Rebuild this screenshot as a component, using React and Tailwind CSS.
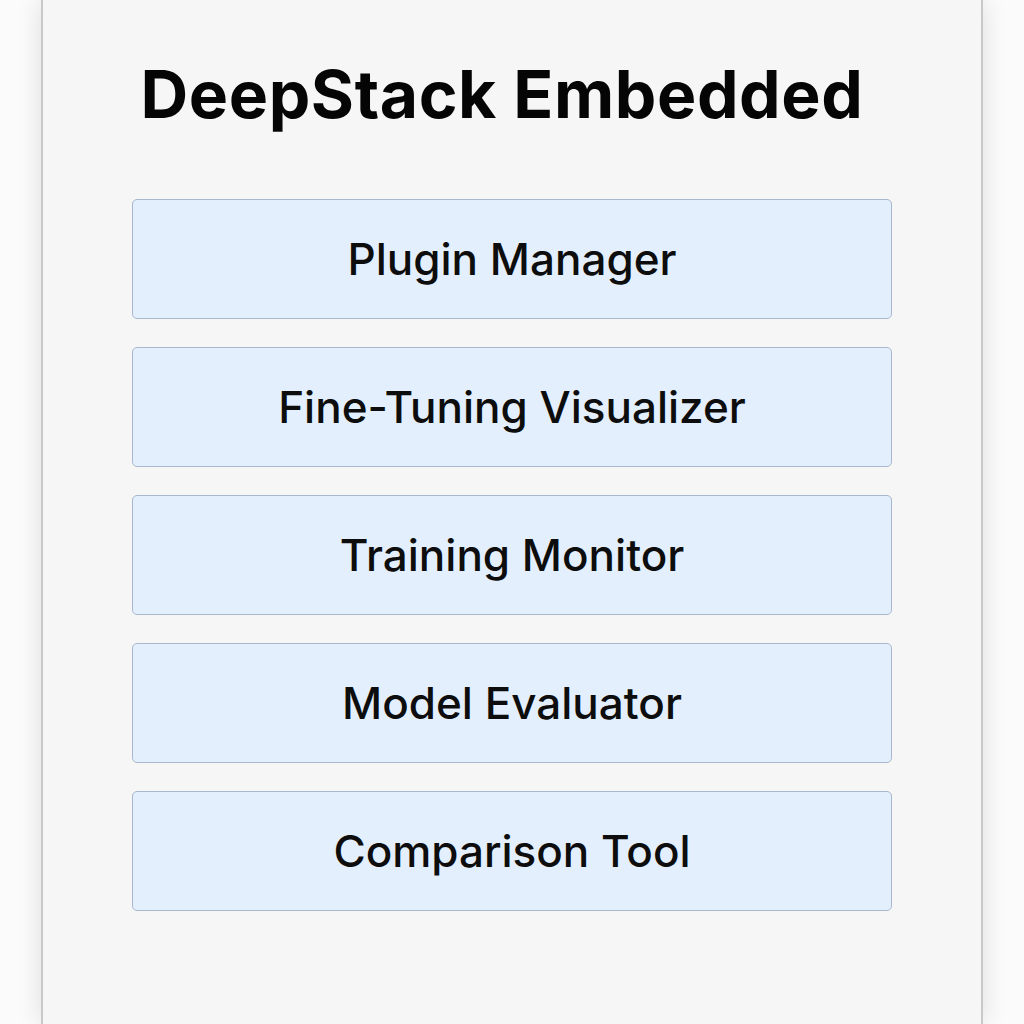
export default function App() {
  const items = [
    'Plugin Manager',
    'Fine-Tuning Visualizer',
    'Training Monitor',
    'Model Evaluator',
    'Comparison Tool',
  ];

  return (
    <div className="min-h-screen bg-[#fbfbfb] flex justify-center" style={{ fontFamily: 'Inter, "Noto Sans", sans-serif' }}>
      <div className="w-[942px] min-h-screen bg-[#f6f6f6] border-x-2 border-[#c9c9c9] shadow-[0_0_24px_rgba(0,0,0,0.12)] flex flex-col items-center">
        <h1 className="mt-[54px] text-[66px] leading-[80px] font-bold text-[#050505] tracking-[0.6px] pr-[20px]">
          DeepStack Embedded
        </h1>
        <div className="mt-[65px] w-[760px] flex flex-col gap-[28px]">
          {items.map((item) => (
            <button
              key={item}
              type="button"
              className="h-[120px] w-full rounded-[5px] border border-[#a8b8cc] bg-[#e3effd] text-[44px] font-medium text-[#0d0d0d] flex items-center justify-center"
            >
              {item}
            </button>
          ))}
        </div>
      </div>
    </div>
  );
}
